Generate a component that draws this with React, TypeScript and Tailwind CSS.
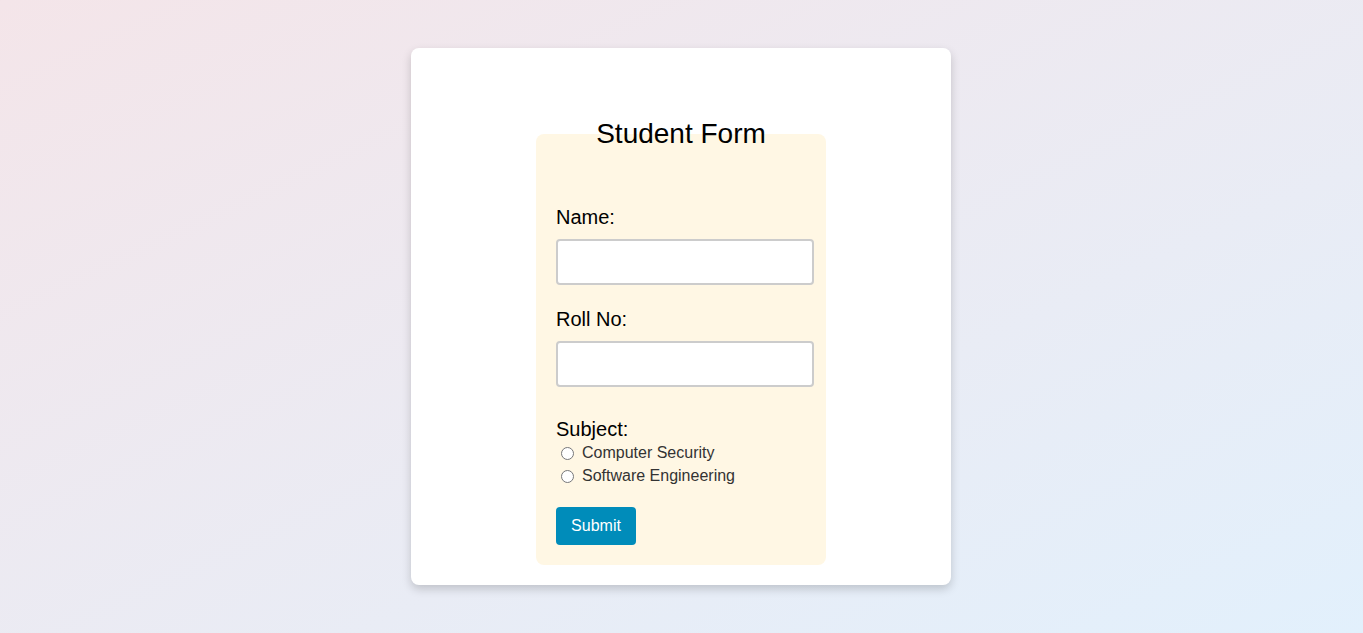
export default function App() {
  return (
    <div className="min-h-screen w-full bg-gradient-to-br from-[#f4e5e9] to-[#e2f0fc] flex justify-center pt-[48px] pr-px font-['Liberation_Sans',Arial,sans-serif]">
      <div className="w-[540px] h-[537px] bg-white rounded-lg shadow-[0_4px_10px_rgba(0,0,0,0.18)] flex flex-col items-center pt-[70px]">
        <h2 className="relative z-10 text-[28px] leading-[32px] text-black">Student Form</h2>
        <form
          className="w-[290px] -mt-[16px] bg-[#fff7e4] rounded-lg pt-[72px] pl-[20px] pr-[12px] pb-[20px]"
          onSubmit={e => e.preventDefault()}
        >
          <label className="block text-[20px] leading-[23px] text-black">Name:</label>
          <input className="block mt-[10px] w-[258px] h-[46px] bg-white border-2 border-[#cccccc] rounded" />

          <label className="block mt-[23px] text-[20px] leading-[23px] text-black">Roll No:</label>
          <input className="block mt-[10px] w-[258px] h-[46px] bg-white border-2 border-[#cccccc] rounded" />

          <label className="block mt-[31px] text-[20px] leading-[23px] text-black">Subject:</label>
          <div className="mt-[3px] flex flex-col gap-[5px] text-[16px] leading-[18px] text-[#333]">
            <label className="flex items-center">
              <input type="radio" name="subject" className="w-[13px] h-[13px] ml-[5px] mr-[8px]" />
              Computer Security
            </label>
            <label className="flex items-center">
              <input type="radio" name="subject" className="w-[13px] h-[13px] ml-[5px] mr-[8px]" />
              Software Engineering
            </label>
          </div>

          <button className="mt-[22px] w-[80px] h-[38px] bg-[#008cba] text-white text-[16px] rounded">Submit</button>
        </form>
      </div>
    </div>
  );
}
